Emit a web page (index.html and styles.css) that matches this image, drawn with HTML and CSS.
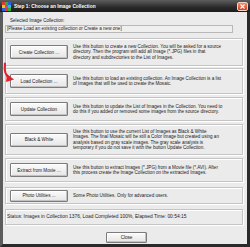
FILE: index.html
```html
<!DOCTYPE html>
<html lang="en">
  <head>
    <meta charset="UTF-8" />
    <title>Step 1: Choose an Image Collection</title>
    <link rel="stylesheet" href="styles.css">
  </head>
  <body>
    <div class="window">
      <div class="titlebar">
        <svg class="app-icon" width="9" height="9" viewBox="0 0 9 9">
          <rect x="0" y="0" width="3" height="3" fill="#e23b2e" />
          <rect x="3" y="0" width="3" height="3" fill="#2fae3a" />
          <rect x="6" y="0" width="3" height="3" fill="#2d5fd8" />
          <rect x="0" y="3" width="3" height="3" fill="#f2c21b" />
          <rect x="3" y="3" width="3" height="3" fill="#c63bc9" />
          <rect x="6" y="3" width="3" height="3" fill="#31b7d6" />
          <rect x="0" y="6" width="3" height="3" fill="#2d5fd8" />
          <rect x="3" y="6" width="3" height="3" fill="#e23b2e" />
          <rect x="6" y="6" width="3" height="3" fill="#2fae3a" />
        </svg>
        <span class="title">Step 1: Choose an Image Collection</span>
        <span class="close-box">
          <svg width="5" height="5" viewBox="0 0 5 5">
            <path d="M0.5 0.5 L4.5 4.5 M4.5 0.5 L0.5 4.5" stroke="#fff" stroke-width="1.1" />
          </svg>
        </span>
      </div>

      <div class="client">
        <div class="label">Selected Image Collection:</div>
        <div class="field">[Please Load an existing collection or Create a new one]</div>

        <div class="group g-create">
          <button class="btn">Create Collection ...</button>
          <p class="desc">Use this button to create a new Collection. You will be asked for a source<br>directory. Then the program will add all Image (*.JPG) files in that<br>directory and subdirectories to the List of Images.</p>
        </div>

        <div class="group g-load">
          <button class="btn">Load Collection ...</button>
          <p class="desc">Use this button to load an existing collection. An Image Collection is a list<br>of Images that will be used to create the Mosaic.</p>
        </div>

        <div class="group g-update">
          <button class="btn">Update Collection</button>
          <p class="desc">Use this button to update the List of Images in the Collection. You need to<br>do this if you added or removed some images from the source directory.</p>
        </div>

        <div class="group g-bw">
          <button class="btn">Black &amp; White</button>
          <p class="desc">Use this button to use the current List of Images as Black &amp; White<br>Images. The final Mosaic will be still a Color Image but created using an<br>analysis based on gray scale images. The gray scale analysis is<br>temporary if you do not save it with the button Update Collection.</p>
        </div>

        <div class="group g-extract">
          <button class="btn">Extract from Movie ...</button>
          <p class="desc">Use this button to extract Images (*.JPG) from a Movie file (*.AVI). After<br>this process create the Image Collection on the extracted Images.</p>
        </div>

        <div class="group g-photo">
          <button class="btn btn-small">Photo Utilities ...</button>
          <p class="desc">Some Photo Utilities. Only for advanced users.</p>
        </div>

        <div class="group g-status">
          <p class="status">Status: Images in Collection 1376, Load Completed 100%, Elapsed Time: 00:54:15</p>
        </div>

        <div class="footer">
          <button class="btn btn-close">Close</button>
        </div>

        <!-- red pointer drawn over the Load button -->
        <svg class="arrow" width="13" height="22" viewBox="0 0 13 22">
          <path d="M3 1.5 Q1.5 13 8 16.5" fill="none" stroke="#e3202c" stroke-width="2.2" stroke-linecap="round" />
          <polygon points="5,12 12,17.5 4,20" fill="#e3202c" />
        </svg>
      </div>
    </div>
  </body>
</html>
```

FILE: styles.css
```css
body {
  margin: 0;
  padding: 0;
  font-family: "Liberation Sans", Arial, sans-serif;
  background-color: #ffffff;
}

.window {
  width: 250px;
  height: 247px;
  box-sizing: border-box;
  display: flex;
  flex-direction: column;
  background-color: #2e2e2e;
  border-left: 3px solid #5c5c5c;
  border-right: 3px solid #2a2a2a;
  border-bottom: 3px solid #2a2a2a;
}

.titlebar {
  height: 12px;
  flex: none;
  margin: 0 -3px;
  padding: 0 2px;
  display: flex;
  align-items: center;
  gap: 3px;
  background: linear-gradient(#5e5e5e, #2a2a2a 60%, #1c1c1c);
  color: #ffffff;
  font-size: 4.8px;
  font-weight: bold;
  white-space: nowrap;
}

.app-icon {
  flex: none;
}

.close-box {
  margin-left: auto;
  width: 11px;
  height: 9px;
  box-sizing: border-box;
  display: flex;
  align-items: center;
  justify-content: center;
  border: 1px solid #f1d3c8;
  border-radius: 2px;
  background: linear-gradient(#f08a6a, #d4401f);
}

.client {
  flex: 1;
  position: relative;
  display: flex;
  flex-direction: column;
  padding: 6px 4px 0 2px;
  background-color: #ebebeb;
  color: #222222;
  font-size: 4.6px;
  line-height: 5.5px;
  white-space: nowrap;
}

.label {
  margin-left: 5px;
  height: 5.5px;
}

.field {
  margin: 1.5px 10px 0 0;
  height: 8px;
  box-sizing: border-box;
  padding: 0 1px;
  display: flex;
  align-items: center;
  border: 1px solid #b8b8b8;
  background-color: #efefef;
}

.group {
  flex: none;
  box-sizing: border-box;
  display: flex;
  align-items: center;
  gap: 5px;
  padding-left: 4px;
  border: 1px solid #c4c4c4;
  box-shadow: inset 1px 1px 0 #ffffff, 1px 1px 0 #ffffff;
}

.g-create {
  margin-top: 5px;
  height: 28px;
}
.g-load {
  margin-top: 2px;
  height: 26px;
}
.g-update {
  margin-top: 3px;
  height: 24px;
}
.g-bw {
  margin-top: 3px;
  height: 31px;
}
.g-extract {
  margin-top: 3px;
  height: 24px;
}
.g-photo {
  margin-top: 5px;
  height: 17px;
}
.g-status {
  margin-top: 5px;
  height: 16px;
  padding-left: 1px;
}

.desc,
.status {
  margin: 0;
}

.status {
  font-size: 4.9px;
}

.btn {
  flex: none;
  width: 58px;
  height: 14px;
  padding: 0;
  font-family: inherit;
  font-size: 4.6px;
  color: #222222;
  background: linear-gradient(#fbfbfb, #e6e6e6);
  border: 1px solid #7c7c7c;
  border-radius: 1px;
  box-shadow: inset -1px -1px 0 #c2c2c2, inset 1px 1px 0 #ffffff;
}

.btn-small {
  height: 12px;
}

.footer {
  display: flex;
  justify-content: center;
  margin-top: 7px;
  padding-left: 5px;
}

.btn-close {
  width: 41px;
  height: 11px;
}

.arrow {
  position: absolute;
  left: -1px;
  top: 50px;
}
```
